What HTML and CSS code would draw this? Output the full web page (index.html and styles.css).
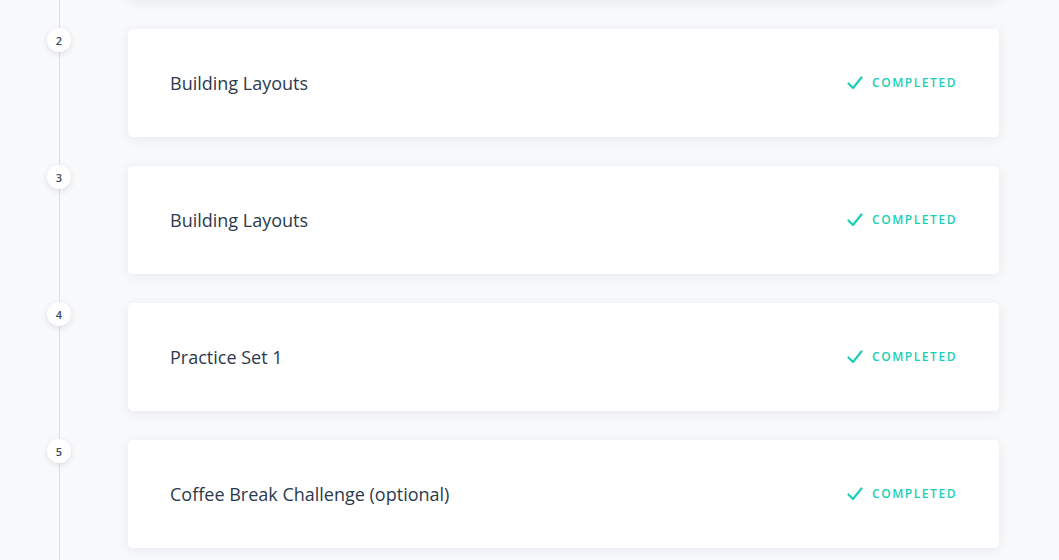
FILE: index.html
```html
<!DOCTYPE html>
<html>
<head>
<meta charset="utf-8">
<link rel="stylesheet" href="styles.css">
</head>
<body>
<div class="timeline">
  <div class="row first">
    <div class="rail"></div>
    <div class="card prev"><div class="prev-bar"></div></div>
  </div>
  <div class="row">
    <div class="rail"><span class="num">2</span></div>
    <div class="card"><span class="title">Building Layouts</span><span class="status"><svg class="check" viewBox="0 0 16 14" width="16" height="14"><path d="M1.5 7.5 L6 12 L14.5 1.5" fill="none" stroke="#19cfb5" stroke-width="2.2" stroke-linecap="round" stroke-linejoin="round"/></svg>COMPLETED</span></div>
  </div>
  <div class="row">
    <div class="rail"><span class="num">3</span></div>
    <div class="card"><span class="title">Building Layouts</span><span class="status"><svg class="check" viewBox="0 0 16 14" width="16" height="14"><path d="M1.5 7.5 L6 12 L14.5 1.5" fill="none" stroke="#19cfb5" stroke-width="2.2" stroke-linecap="round" stroke-linejoin="round"/></svg>COMPLETED</span></div>
  </div>
  <div class="row">
    <div class="rail"><span class="num">4</span></div>
    <div class="card"><span class="title">Practice Set 1</span><span class="status"><svg class="check" viewBox="0 0 16 14" width="16" height="14"><path d="M1.5 7.5 L6 12 L14.5 1.5" fill="none" stroke="#19cfb5" stroke-width="2.2" stroke-linecap="round" stroke-linejoin="round"/></svg>COMPLETED</span></div>
  </div>
  <div class="row">
    <div class="rail"><span class="num">5</span></div>
    <div class="card"><span class="title">Coffee Break Challenge (optional)</span><span class="status"><svg class="check" viewBox="0 0 16 14" width="16" height="14"><path d="M1.5 7.5 L6 12 L14.5 1.5" fill="none" stroke="#19cfb5" stroke-width="2.2" stroke-linecap="round" stroke-linejoin="round"/></svg>COMPLETED</span></div>
  </div>
  <div class="row">
    <div class="rail"></div>
    <div class="card"></div>
  </div>
</div>
</body>
</html>
```
FILE: styles.css
```css
* { box-sizing: border-box; }
html, body { margin: 0; padding: 0; }
body {
  background: #f8f9fb;
  font-family: "Open Sans", "Liberation Sans", sans-serif;
  overflow: hidden;
  height: 560px;
}
.timeline {
  display: flex;
  flex-direction: column;
  margin-top: -108px;
  width: 1059px;
}
.row {
  display: grid;
  grid-template-columns: 128px 871px;
}
.rail {
  position: relative;
  height: 137px;
}
.rail::before {
  content: "";
  position: absolute;
  left: 59px;
  top: 0;
  bottom: 0;
  width: 1px;
  background: #dcdfe3;
}
.num {
  position: absolute;
  left: 47px;
  top: -1px;
  width: 24px;
  height: 24px;
  border-radius: 50%;
  background: #fff;
  box-shadow: 0 2px 6px rgba(30, 40, 60, 0.12);
  display: flex;
  align-items: center;
  justify-content: center;
  font-size: 11px;
  font-weight: 600;
  color: #3a4a5e;
  line-height: 1;
}
.card {
  height: 108px;
  background: #fff;
  border-radius: 5px;
  box-shadow: 0 2px 12px rgba(30, 40, 60, 0.08);
  display: flex;
  align-items: center;
  justify-content: space-between;
  padding: 0 42px 0 42px;
  position: relative;
  overflow: hidden;
}
.prev-bar {
  position: absolute;
  right: 0;
  bottom: 0;
  width: 296px;
  height: 2px;
  background: #e3f6f8;
}
.title {
  font-size: 18px;
  color: #2b3a4e;
}
.status {
  display: flex;
  align-items: center;
  gap: 9px;
  font-size: 12px;
  font-weight: 600;
  letter-spacing: 1.55px;
  color: #19cfb5;
  margin-top: -1px;
}
.check { display: block; }
```
